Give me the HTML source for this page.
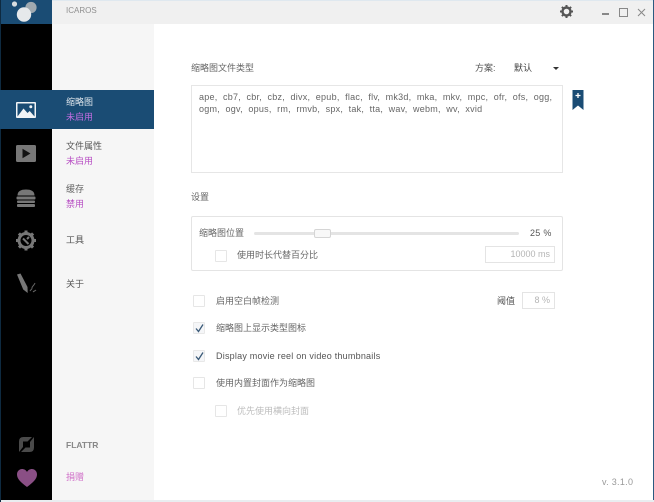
<!DOCTYPE html>
<html lang="zh">
<head>
<meta charset="utf-8">
<title>Icaros</title>
<style>
html,body{margin:0;padding:0;width:654px;height:502px;overflow:hidden;background:#fff}
body{position:relative;font-family:"Liberation Sans","Noto Sans CJK SC",sans-serif;font-size:9px;color:#555}
div,svg,span{position:absolute}
.t{white-space:nowrap;line-height:12px;filter:blur(.35px)}
.p{color:#b84fc4}
.cb{width:10px;height:10px;border:1px solid #e6e6e6;background:#fff;border-radius:1px}
.cb.on{background:#f5f6f8;border-color:#e8e8e8}
.cb svg{left:1px;top:1px}
.in{border:1px solid #e4e4e4;background:#fff;color:#b5b5b5;text-align:right;box-sizing:border-box;line-height:15px;padding-right:4px;white-space:nowrap}
</style>
</head>
<body>
<div style="left:52px;top:0;width:601px;height:24px;background:#f0f0f0;border-top:1px solid #dfe8ef;box-sizing:border-box"></div>
<div style="left:0;top:0;width:52px;height:502px;background:#000"></div>
<div style="left:0;top:0;width:52px;height:24px;background:#1a4c74"></div>
<div style="left:52px;top:24px;width:102px;height:478px;background:#f6f6f6"></div>
<div style="left:653px;top:0;width:1px;height:502px;background:#2b5a80"></div>
<div style="left:0;top:500px;width:654px;height:2px;background:#e9edf0"></div>
<div style="left:0;top:0;width:1px;height:502px;background:#0e2a40"></div>

<svg style="left:8px;top:0" width="32" height="24" viewBox="0 0 32 24">
<circle cx="6.500" cy="4" r="2.600" fill="#d8dde0"/>
<circle cx="23" cy="7.500" r="5.600" fill="#9fa9b0"/>
<circle cx="16" cy="14.500" r="7.200" fill="#e6e9eb"/>
</svg>
<div class="t" style="left:66px;top:5px;color:#8f8f8f;font-size:8px">ICAROS</div>

<!-- selected -->
<div style="left:0;top:90px;width:154px;height:39px;background:#1a4c74"></div>
<svg style="left:16px;top:102px" width="20" height="16" viewBox="0 0 20 16">
<rect width="20" height="16" rx="1" fill="#f2f4f6"/>
<rect x="1.500" y="1.500" width="17" height="13" fill="#1a4c74"/>
<path d="M1.500 14.500 7.500 6.500l4 4.500 2.200-2 4.800 5.500z" fill="#f2f4f6"/>
<circle cx="14.800" cy="4.800" r="1.500" fill="#f2f4f6"/>
</svg>
<div class="t" style="left:66px;top:96px;color:#dfe6ec">缩略图</div>
<div class="t p" style="left:66px;top:111px;color:#c06ce0">未启用</div>

<!-- play -->
<svg style="left:16px;top:145px" width="20" height="17" viewBox="0 0 20 17">
<rect width="20" height="17" rx="1.500" fill="#777"/>
<path d="M6.500 3.800v9.400l8-4.700z" fill="#111"/>
</svg>
<div class="t" style="left:66px;top:140px;color:#555">文件属性</div>
<div class="t p" style="left:66px;top:155px">未启用</div>

<!-- cache -->
<svg style="left:16px;top:189px" width="20" height="18" viewBox="0 0 20 18">
<path d="M1.500 6.500C1.500 2 5 .5 10 .5s8.500 1.500 8.500 6z" fill="#777"/>
<rect x="0.500" y="7.500" width="19" height="3" rx="1" fill="#777"/>
<rect x="1" y="11.500" width="18" height="2.500" rx="1" fill="#777"/>
<rect x="1" y="15" width="18" height="3" rx="1" fill="#777"/>
</svg>
<div class="t" style="left:66px;top:183px;color:#666">缓存</div>
<div class="t p" style="left:66px;top:198px">禁用</div>

<!-- gear -->
<svg style="left:15px;top:230px" width="22" height="21" viewBox="0 0 22 21">
<circle cx="11" cy="10.500" r="7" fill="none" stroke="#777" stroke-width="3"/>
<path d="M11 .5v20M1 10.500h20M3.900 3.400l14.200 14.200M18.100 3.400 3.900 17.600" stroke="#777" stroke-width="3" stroke-dasharray="3 14 3"/>
<path d="M8 8.500l3 3 2.500 2.500M14 7l-2 2" stroke="#777" stroke-width="2" fill="none"/>
</svg>
<div class="t" style="left:66px;top:234px;color:#555">工具</div>

<!-- pen -->
<svg style="left:16px;top:273px" width="22" height="22" viewBox="0 0 22 22">
<path d="M1 1.500 4.500.5 11.500 14l.2 6-4.500-3.500z" fill="#777"/>
<path d="M14 18c1-2 2-1 2-3s2-2 3-5M17 19c1-1 2-1 3-2" stroke="#666" stroke-width="1" fill="none"/>
</svg>
<div class="t" style="left:66px;top:278px;color:#555">关于</div>

<!-- flattr -->
<svg style="left:18px;top:436px" width="17" height="17" viewBox="0 0 17 17">
<path d="M1 16V5.500Q1 1 5.500 1H14L9.500 5.500H5V11zM16 1v10.500Q16 16 11.500 16H3L7.500 11.500H12V6z" fill="#4a4a4a"/>
</svg>
<div class="t" style="left:66px;top:439px;color:#888;font-weight:bold;font-size:8.500px">FLATTR</div>

<!-- heart -->
<svg style="left:17px;top:469px" width="20" height="18" viewBox="0 0 20 18">
<path d="M10 18C4 13.500 0 10 0 5.500 0 2 2.500 0 5 0c2 0 4 1 5 3 1-2 3-3 5-3 2.500 0 5 2 5 5.500C20 10 16 13.500 10 18z" fill="#8a4f85"/>
</svg>
<div class="t" style="left:66px;top:471px;color:#d070c8">捐赠</div>

<!-- window controls -->
<svg style="left:560px;top:5px" width="13" height="13" viewBox="0 0 13 13">
<circle cx="6.500" cy="6.500" r="4" fill="none" stroke="#555" stroke-width="2.400"/>
<path d="M6.500 0v13M0 6.500h13M1.900 1.900l9.200 9.200M11.100 1.900 1.900 11.100" stroke="#555" stroke-width="2" stroke-dasharray="2 9 2"/>
</svg>
<div style="left:602px;top:13px;width:7px;height:2px;background:#888"></div>
<div style="left:619px;top:8px;width:7px;height:7px;border:1px solid #888"></div>
<svg style="left:637px;top:8px" width="9" height="9" viewBox="0 0 9 9"><path d="M1 1l7 7M8 1 1 8" stroke="#888" stroke-width="1"/></svg>

<!-- content -->
<div class="t" style="left:191px;top:62px;color:#666">缩略图文件类型</div>
<div class="t" style="left:475px;top:62px;color:#555">方案:</div>
<div class="t" style="left:514px;top:62px;color:#444">默认</div>
<div style="left:553px;top:67px;width:0;height:0;border-left:3px solid transparent;border-right:3px solid transparent;border-top:3px solid #333"></div>

<div style="left:191px;top:85px;width:372px;height:88px;box-sizing:border-box;border:1px solid #e6e6e6;background:#fff"></div>
<div class="t" style="left:199px;top:91px;color:#666;letter-spacing:.25px">ape, &nbsp;cb7, &nbsp;cbr, &nbsp;cbz, &nbsp;divx, &nbsp;epub, &nbsp;flac, &nbsp;flv, &nbsp;mk3d, &nbsp;mka, &nbsp;mkv, &nbsp;mpc, &nbsp;ofr, &nbsp;ofs, &nbsp;ogg,</div>
<div class="t" style="left:199px;top:103px;color:#666;letter-spacing:.25px">ogm, &nbsp;ogv, &nbsp;opus, &nbsp;rm, &nbsp;rmvb, &nbsp;spx, &nbsp;tak, &nbsp;tta, &nbsp;wav, &nbsp;webm, &nbsp;wv, &nbsp;xvid</div>

<svg style="left:572px;top:90px" width="12" height="20" viewBox="0 0 12 20">
<path d="M.5 0h11v20L6 15.500.5 20z" fill="#1a4c74"/>
<path d="M6 3v5M3.500 5.500h5" stroke="#fff" stroke-width="1.300"/>
</svg>

<div class="t" style="left:191px;top:191px;color:#666">设置</div>
<div style="left:191px;top:216px;width:372px;height:55px;box-sizing:border-box;border:1px solid #e4e4e4;border-radius:2px"></div>
<div class="t" style="left:199px;top:227px;color:#666">缩略图位置</div>
<div style="left:254px;top:232px;width:265px;height:3px;background:#e4e4e4;border-radius:2px"></div>
<div style="left:314px;top:229px;width:17px;height:9px;box-sizing:border-box;border:1px solid #d5d5d5;border-radius:2px;background:#f8f8f8"></div>
<div class="t" style="left:530px;top:227px;color:#555;letter-spacing:.3px">25 %</div>
<div class="cb" style="left:215px;top:250px"></div>
<div class="t" style="left:237px;top:249px;color:#666">使用时长代替百分比</div>
<div class="in" style="left:485px;top:246px;width:70px;height:17px">10000 ms</div>

<div class="cb" style="left:193px;top:295px"></div>
<div class="t" style="left:216px;top:295px;color:#666">启用空白帧检测</div>
<div class="t" style="left:497px;top:295px;color:#555">阈值</div>
<div class="in" style="left:522px;top:292px;width:33px;height:17px">8 %</div>

<div class="cb on" style="left:193px;top:322px"><svg width="9" height="9" viewBox="0 0 9 9"><path d="M1 4.500l2.500 3L8 .5" stroke="#3a5a78" stroke-width="1.300" fill="none"/></svg></div>
<div class="t" style="left:216px;top:322px;color:#666">缩略图上显示类型图标</div>
<div class="cb on" style="left:193px;top:350px"><svg width="9" height="9" viewBox="0 0 9 9"><path d="M1 4.500l2.500 3L8 .5" stroke="#3a5a78" stroke-width="1.300" fill="none"/></svg></div>
<div class="t" style="left:216px;top:350px;color:#555;letter-spacing:.22px">Display movie reel on video thumbnails</div>
<div class="cb" style="left:193px;top:377px"></div>
<div class="t" style="left:216px;top:377px;color:#666">使用内置封面作为缩略图</div>
<div class="cb" style="left:215px;top:405px"></div>
<div class="t" style="left:237px;top:405px;color:#bdbdbd">优先使用横向封面</div>

<div class="t" style="left:602px;top:476px;color:#999;letter-spacing:.3px">v. 3.1.0</div>
</body>
</html>
